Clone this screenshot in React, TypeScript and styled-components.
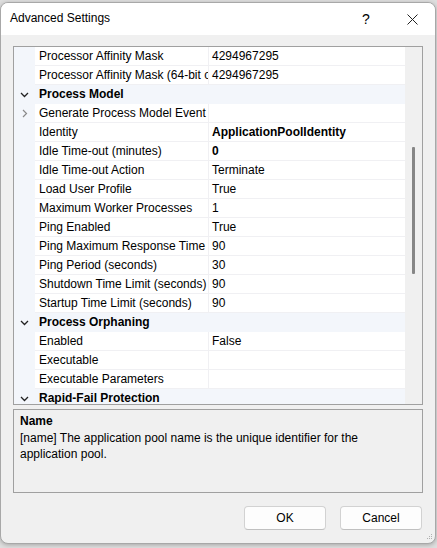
import styled, { createGlobalStyle } from "styled-components";

const GlobalStyle = createGlobalStyle`
  html, body {
    margin: 0;
    padding: 0;
    background: #dedede;
  }
  body {
    font-family: "Segoe UI", "Liberation Sans", Arial, sans-serif;
    font-size: 12px;
    color: #000;
  }
`;

const Page = styled.div`
  width: 437px;
  height: 548px;
  padding-top: 2px;
  box-sizing: border-box;
  overflow: hidden;
`;

const Window = styled.div`
  width: 436px;
  height: 542px;
  box-sizing: border-box;
  border: 1px solid #a8a8a8;
  border-radius: 8px;
  background: #f0f0f0;
  overflow: hidden;
  display: flex;
  flex-direction: column;
  position: relative;
  box-shadow: 0 1px 4px rgba(0, 0, 0, 0.25);
`;

const TitleBar = styled.div`
  height: 32px;
  background: #ffffff;
  display: flex;
  align-items: center;
  flex-shrink: 0;
`;

const Title = styled.div`
  flex: 1;
  padding-left: 9px;
  font-size: 12px;
  padding-bottom: 2px;
`;

const CaptionButton = styled.div`
  width: 46px;
  height: 32px;
  display: flex;
  align-items: center;
  justify-content: center;
  font-size: 14px;
`;

const Body = styled.div`
  flex: 1;
  padding: 11px 12px 0 12px;
  display: flex;
  flex-direction: column;
`;

const Grid = styled.div`
  height: 359px;
  box-sizing: border-box;
  border: 1px solid #a0a0a0;
  display: flex;
  background: #f0f0f0;
  overflow: hidden;
`;

const Rows = styled.div`
  width: 391px;
  display: flex;
  flex-direction: column;
  background: #ffffff;
`;

const Row = styled.div<{ $category?: boolean }>`
  height: 19px;
  flex-shrink: 0;
  display: flex;
  background: ${(p) => (p.$category ? "#f3f6fb" : "#ffffff")};
`;

const Gutter = styled.div<{ $category?: boolean }>`
  width: 21px;
  flex-shrink: 0;
  background: ${(p) => (p.$category ? "transparent" : "#f3f6fb")};
  display: flex;
  align-items: center;
  justify-content: center;
`;

const NameCell = styled.div<{ $category?: boolean }>`
  width: 174px;
  flex-shrink: 0;
  box-sizing: border-box;
  padding-left: 4px;
  line-height: 18px;
  white-space: nowrap;
  overflow: hidden;
  text-overflow: clip;
  font-weight: ${(p) => (p.$category ? "bold" : "normal")};
  border-bottom: 1px solid ${(p) => (p.$category ? "transparent" : "#f0f0f3")};
  border-right: 1px solid ${(p) => (p.$category ? "transparent" : "#f0f0f3")};
`;

const CategoryName = styled(NameCell)`
  width: auto;
  flex: 1;
  border-right: none;
`;

const ValueCell = styled.div<{ $bold?: boolean }>`
  flex: 1;
  box-sizing: border-box;
  padding-left: 3px;
  line-height: 18px;
  white-space: nowrap;
  overflow: hidden;
  font-weight: ${(p) => (p.$bold ? "bold" : "normal")};
  border-bottom: 1px solid #f0f0f3;
`;

const ScrollTrack = styled.div`
  flex: 1;
  position: relative;
  background: #f0f0f0;
`;

const ScrollThumb = styled.div`
  position: absolute;
  left: 7px;
  top: 100px;
  width: 3px;
  height: 127px;
  border-radius: 1px;
  background: #868686;
`;

const Description = styled.div`
  margin-top: 4px;
  height: 84px;
  box-sizing: border-box;
  border: 1px solid #a0a0a0;
  padding: 3px 6px;
  line-height: 16.5px;
`;

const DescTitle = styled.div`
  font-weight: bold;
`;

const Buttons = styled.div`
  display: flex;
  justify-content: flex-end;
  gap: 14px;
  margin-top: 13px;
  padding-right: 1px;
`;

const Button = styled.div`
  width: 82px;
  height: 24px;
  box-sizing: border-box;
  background: #fdfdfd;
  border: 1px solid #d2d2d2;
  border-bottom-color: #c0c0c0;
  border-radius: 4px;
  display: flex;
  align-items: center;
  justify-content: center;
`;

const Grip = styled.svg`
  position: absolute;
  right: 2px;
  bottom: 2px;
`;

type Item =
  | { kind: "cat"; name: string }
  | { kind: "prop"; name: string; value?: string; bold?: boolean; expand?: boolean };

const items: Item[] = [
  { kind: "prop", name: "Processor Affinity Mask", value: "4294967295" },
  { kind: "prop", name: "Processor Affinity Mask (64-bit option)", value: "4294967295" },
  { kind: "cat", name: "Process Model" },
  { kind: "prop", name: "Generate Process Model Event Log Entry", value: "", expand: true },
  { kind: "prop", name: "Identity", value: "ApplicationPoolIdentity", bold: true },
  { kind: "prop", name: "Idle Time-out (minutes)", value: "0", bold: true },
  { kind: "prop", name: "Idle Time-out Action", value: "Terminate" },
  { kind: "prop", name: "Load User Profile", value: "True" },
  { kind: "prop", name: "Maximum Worker Processes", value: "1" },
  { kind: "prop", name: "Ping Enabled", value: "True" },
  { kind: "prop", name: "Ping Maximum Response Time (seconds)", value: "90" },
  { kind: "prop", name: "Ping Period (seconds)", value: "30" },
  { kind: "prop", name: "Shutdown Time Limit (seconds)", value: "90" },
  { kind: "prop", name: "Startup Time Limit (seconds)", value: "90" },
  { kind: "cat", name: "Process Orphaning" },
  { kind: "prop", name: "Enabled", value: "False" },
  { kind: "prop", name: "Executable", value: "" },
  { kind: "prop", name: "Executable Parameters", value: "" },
  { kind: "cat", name: "Rapid-Fail Protection" },
];

const ChevronDown = () => (
  <svg width="9" height="6" viewBox="0 0 9 6">
    <path d="M1 1 L4.5 4.5 L8 1" fill="none" stroke="#222" strokeWidth="1.3" />
  </svg>
);

const ChevronRight = () => (
  <svg width="6" height="9" viewBox="0 0 6 9">
    <path d="M1 1 L4.5 4.5 L1 8" fill="none" stroke="#8a8a8a" strokeWidth="1.2" />
  </svg>
);

const App = () => {
  return (
    <Page>
      <GlobalStyle />
      <Window>
        <TitleBar>
          <Title>Advanced Settings</Title>
          <CaptionButton>?</CaptionButton>
          <CaptionButton>
            <svg width="11" height="11" viewBox="0 0 11 11">
              <path d="M0.5 0.5 L10.5 10.5 M10.5 0.5 L0.5 10.5" stroke="#222" strokeWidth="1" />
            </svg>
          </CaptionButton>
        </TitleBar>
        <Body>
          <Grid>
            <Rows>
              {items.map((it, idx) =>
                it.kind === "cat" ? (
                  <Row key={idx} $category>
                    <Gutter $category>
                      <ChevronDown />
                    </Gutter>
                    <CategoryName $category>{it.name}</CategoryName>
                  </Row>
                ) : (
                  <Row key={idx}>
                    <Gutter>{it.expand && <ChevronRight />}</Gutter>
                    <NameCell>{it.name}</NameCell>
                    <ValueCell $bold={it.bold}>{it.value}</ValueCell>
                  </Row>
                )
              )}
            </Rows>
            <ScrollTrack>
              <ScrollThumb />
            </ScrollTrack>
          </Grid>
          <Description>
            <DescTitle>Name</DescTitle>
            <div>
              [name] The application pool name is the unique identifier for the
              <br />
              application pool.
            </div>
          </Description>
          <Buttons>
            <Button>OK</Button>
            <Button>Cancel</Button>
          </Buttons>
        </Body>
        <Grip width="7" height="7" viewBox="0 0 7 7">
          <rect x="5" y="0" width="1" height="1" fill="#b0b0b0" />
          <rect x="3" y="2" width="1" height="1" fill="#b0b0b0" />
          <rect x="5" y="2" width="1" height="1" fill="#b0b0b0" />
          <rect x="1" y="4" width="1" height="1" fill="#b0b0b0" />
          <rect x="3" y="4" width="1" height="1" fill="#b0b0b0" />
          <rect x="5" y="4" width="1" height="1" fill="#b0b0b0" />
        </Grip>
      </Window>
    </Page>
  );
};

export default App;
